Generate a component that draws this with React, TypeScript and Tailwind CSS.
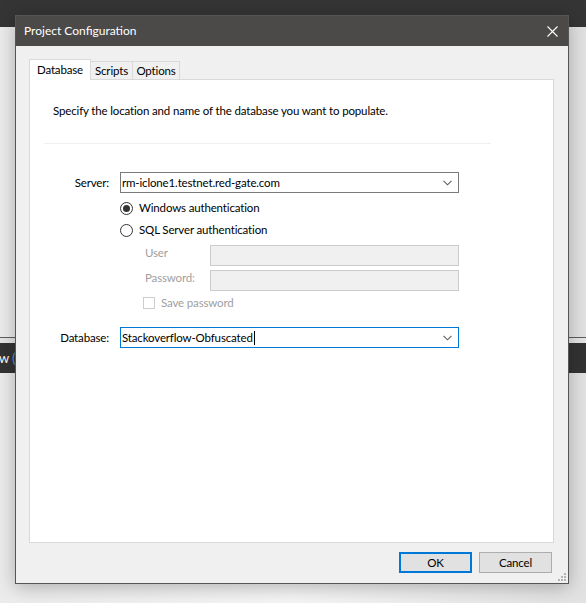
import React from 'react';

function Chevron() {
  return (
    <svg width="9" height="6" viewBox="0 0 9 6" className="shrink-0">
      <path d="M0.5 0.8 L4.5 4.8 L8.5 0.8" fill="none" stroke="#5f5f5f" strokeWidth="1.1" />
    </svg>
  );
}

function Radio({ checked, label }: { checked?: boolean; label: string }) {
  return (
    <div className="flex h-[16px] items-center">
      <div className="flex h-[13px] w-[13px] items-center justify-center rounded-full border border-[#333] bg-white">
        {checked && <div className="h-[7px] w-[7px] rounded-full bg-[#333]" />}
      </div>
      <span className="ml-[6px] leading-[16px]">{label}</span>
    </div>
  );
}

function Combo({ value, focused, caret }: { value: string; focused?: boolean; caret?: boolean }) {
  return (
    <div
      className={`flex h-[21px] w-[339px] items-center justify-between bg-white pl-[1px] pr-[6px] border ${
        focused ? 'border-[#0078d7]' : 'border-[#7a7a7a]'
      }`}
    >
      <span className="flex items-center leading-[16px]">
        {value}
        {caret && <span className="ml-[1px] inline-block h-[14px] w-px bg-black" />}
      </span>
      <Chevron />
    </div>
  );
}

function Tabs() {
  return (
    <div className="flex items-end">
      <div className="relative z-10 -mb-px flex h-[21px] w-[62px] items-start justify-center border border-b-0 border-[#d9d9d9] bg-white pt-[2px] leading-[16px]">
        Database
      </div>
      <div className="flex h-[18px] w-[42px] items-center justify-center border border-b-0 border-l-0 border-[#d9d9d9] leading-[16px]">
        Scripts
      </div>
      <div className="flex h-[18px] w-[47px] items-center justify-center border border-b-0 border-l-0 border-[#d9d9d9] leading-[16px]">
        Options
      </div>
    </div>
  );
}

function DatabasePanel() {
  return (
    <div className="flex h-[464px] flex-col border border-[#d9d9d9] bg-white">
      <p className="pl-[23px] pt-[23px] leading-[16px]">
        Specify the location and name of the database you want to populate.
      </p>
      <div className="ml-[14px] mt-[24px] h-px w-[447px] bg-[#f0f0f0]" />

      <div className="mt-[28px] flex items-center">
        <span className="w-[79px] text-right leading-[16px]">Server:</span>
        <div className="ml-[11px]">
          <Combo value="rm-iclone1.testnet.red-gate.com" />
        </div>
      </div>

      <div className="ml-[90px] flex flex-col">
        <div className="mt-[7px]">
          <Radio checked label="Windows authentication" />
        </div>
        <div className="mt-[6px]">
          <Radio label="SQL Server authentication" />
        </div>

        <div className="mt-[7px] flex items-start text-[#a0a0a0]">
          <span className="ml-[25px] w-[65px] leading-[16px]">User</span>
          <div className="h-[21px] w-[249px] border border-[#cccccc] bg-[#f0f0f0]" />
        </div>
        <div className="mt-[4px] flex items-start text-[#a0a0a0]">
          <span className="ml-[25px] w-[65px] leading-[16px]">Password:</span>
          <div className="h-[21px] w-[249px] border border-[#cccccc] bg-[#f0f0f0]" />
        </div>

        <div className="ml-[23px] mt-[5px] flex h-[13px] items-center text-[#a0a0a0]">
          <div className="h-[12px] w-[12px] border border-[#cccccc] bg-white" />
          <span className="ml-[6px] leading-[16px]">Save password</span>
        </div>
      </div>

      <div className="mt-[18px] flex items-center">
        <span className="w-[79px] text-right leading-[16px]">Database:</span>
        <div className="ml-[11px]">
          <Combo value="Stackoverflow-Obfuscated" focused caret />
        </div>
      </div>
    </div>
  );
}

function Grip() {
  const dots = [
    [6, 0],
    [3, 3],
    [6, 3],
    [0, 6],
    [3, 6],
    [6, 6],
  ];
  return (
    <div className="absolute bottom-[2px] right-[2px] h-[8px] w-[8px]">
      {dots.map(([x, y], i) => (
        <div
          key={i}
          className="absolute h-[2px] w-[2px] bg-[#b4b4b4]"
          style={{ left: x, top: y }}
        />
      ))}
    </div>
  );
}

function Dialog() {
  return (
    <div className="absolute left-[15px] top-[15px] flex h-[569px] w-[554px] flex-col border border-[#555555] bg-[#f0f0f0] shadow-[0_3px_18px_rgba(0,0,0,0.28)]">
      <div className="flex h-[30px] shrink-0 items-center justify-between bg-[#4b4a48] pl-[8px] pr-[10px] text-[12px] tracking-normal text-white">
        <span className="leading-[16px]">Project Configuration</span>
        <svg width="11" height="11" viewBox="0 0 11 11">
          <path d="M0.5 0.5 L10.5 10.5 M10.5 0.5 L0.5 10.5" stroke="#ffffff" strokeWidth="1.1" />
        </svg>
      </div>
      <div className="relative flex flex-1 flex-col pl-[13px] pr-[14px] pt-[13px]">
        <Tabs />
        <DatabasePanel />
        <div className="mt-[9px] flex justify-end gap-[7px] pr-[2px]">
          <button className="flex h-[21px] w-[73px] items-center justify-center border-2 border-[#0078d7] bg-[#e1e1e1] leading-[16px]">
            OK
          </button>
          <button className="flex h-[21px] w-[73px] items-center justify-center border border-[#adadad] bg-[#e1e1e1] leading-[16px]">
            Cancel
          </button>
        </div>
        <Grip />
      </div>
    </div>
  );
}

export default function App() {
  return (
    <div className="relative h-[603px] w-[586px] overflow-hidden bg-[#f0f0f0] font-['Lato',sans-serif] text-[11.5px] tracking-[-0.15px] text-black">
      {/* application behind the dialog */}
      <div className="flex h-full flex-col">
        <div className="h-[27px] bg-[#353535]" />
        <div className="h-[310px] bg-gradient-to-r from-[#ececec] via-[#f6f6f6] to-[#e2e2e2]" />
        <div className="h-px bg-[#5e5e5e]" />
        <div className="h-[5px] bg-[#e6e6e6]" />
        <div className="flex h-[30px] items-center bg-[#333333] text-[13px] leading-none text-white">
          <span className="-ml-[1px]">w</span>
          <span className="ml-[3px] text-[#5b9bd5]">(</span>
        </div>
        <div className="flex-1 bg-gradient-to-r from-[#ececec] via-[#f6f6f6] to-[#e2e2e2]" />
      </div>
      <Dialog />
    </div>
  );
}
